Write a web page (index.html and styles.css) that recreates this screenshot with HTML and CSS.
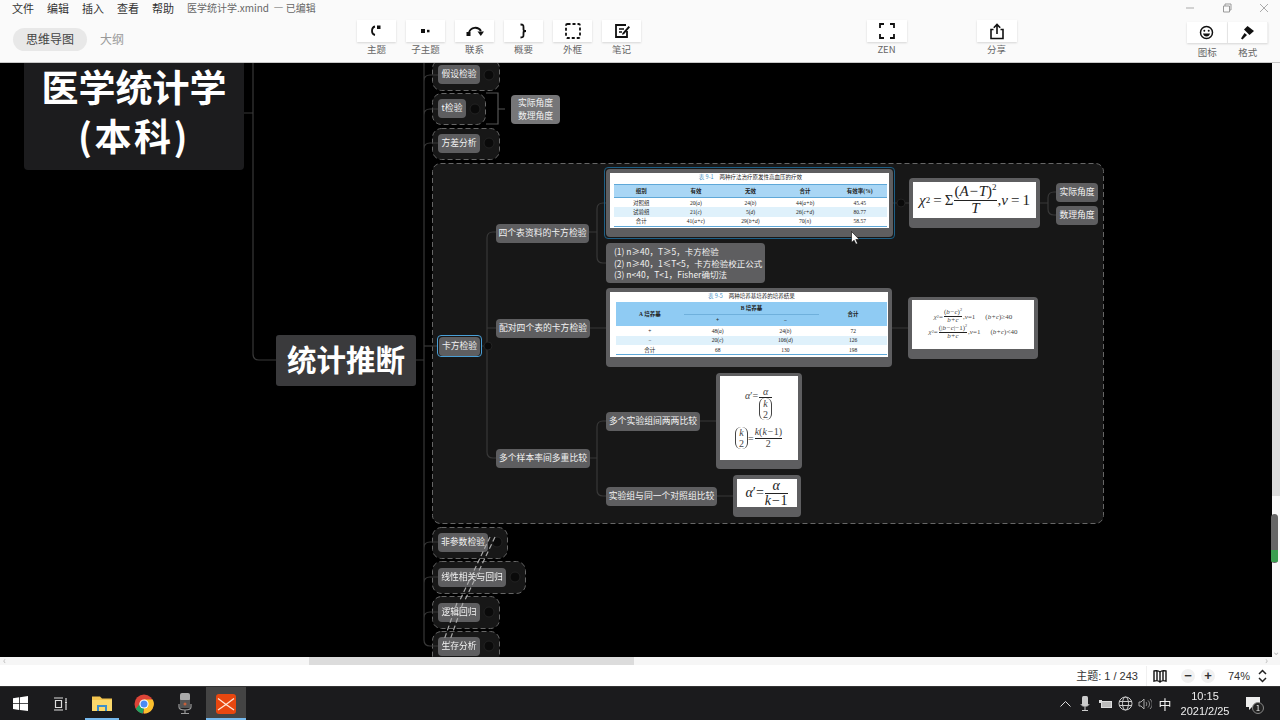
FILE: index.html
```html
<!doctype html>
<html lang="zh">
  <head>
    <meta charset="UTF-8" />
    <title>医学统计学.xmind</title>
    <link rel="stylesheet" href="styles.css">
  </head>
  <body>
    <div class="app">
      <header class="topbar">
        <div class="topbar-left">
          <nav class="menu">
            <span>文件</span><span>编辑</span><span>插入</span><span>查看</span><span>帮助</span>
            <span class="doc-title">医学统计学.xmind &nbsp;— 已编辑</span>
          </nav>
          <div class="tabs">
            <span class="tab tab-on">思维导图</span>
            <span class="tab">大纲</span>
          </div>
        </div>

        <div class="tools">
          <div class="tool">
            <div class="tool-btn"><svg width="16" height="16" viewBox="0 0 16 16"><path d="M6 3.500C3.500 4 3 6 3 8s.5 3.500 3 4" fill="none" stroke="#111" stroke-width="1.800"/><rect x="8" y="2.500" width="3.500" height="3.500" fill="#111"/></svg></div>
            <span>主题</span>
          </div>
          <div class="tool">
            <div class="tool-btn"><svg width="16" height="16" viewBox="0 0 16 16"><rect x="3" y="6" width="4" height="4" fill="#111"/><rect x="9" y="6.800" width="2.500" height="2.500" fill="#111"/></svg></div>
            <span>子主题</span>
          </div>
          <div class="tool">
            <div class="tool-btn"><svg width="20" height="16" viewBox="0 0 20 16"><path d="M4 9.500C5.500 4 13 3 16 8" fill="none" stroke="#111" stroke-width="1.800"/><rect x="1.500" y="9" width="4" height="4" fill="#111"/><path d="M12.500 8.500h6.500l-3.200 4.500z" fill="#111"/></svg></div>
            <span>联系</span>
          </div>
          <div class="tool">
            <div class="tool-btn"><svg width="16" height="16" viewBox="0 0 16 16"><path d="M4.500 1.500c3 0 3 1 3 3v2c0 1 .5 1.500 2.500 1.500-2 0-2.500.5-2.500 1.500v2c0 2 0 3-3 3" fill="none" stroke="#111" stroke-width="1.800"/></svg></div>
            <span>概要</span>
          </div>
          <div class="tool">
            <div class="tool-btn"><svg width="18" height="18" viewBox="0 0 18 18"><rect x="2" y="2" width="14" height="14" rx="1.500" fill="none" stroke="#111" stroke-width="1.800" stroke-dasharray="3 2"/></svg></div>
            <span>外框</span>
          </div>
          <div class="tool">
            <div class="tool-btn"><svg width="18" height="18" viewBox="0 0 18 18"><path d="M14 9v6H3V3h10" fill="none" stroke="#111" stroke-width="1.800"/><path d="M6 7h5M6 10h3" stroke="#111" stroke-width="1.500"/><path d="M9.500 11l6-7 1.500 1.300-6 7-2 .4z" fill="#111"/></svg></div>
            <span>笔记</span>
          </div>
        </div>

        <div class="tool tool-zen">
          <div class="tool-btn tool-wide"><svg width="16" height="16" viewBox="0 0 16 16"><path d="M1 5V1h4M11 1h4v4M15 11v4h-4M5 15H1v-4" fill="none" stroke="#111" stroke-width="1.800"/></svg></div>
          <span>ZEN</span>
        </div>
        <div class="tool tool-share">
          <div class="tool-btn tool-wide"><svg width="16" height="17" viewBox="0 0 16 17"><path d="M4.500 6.500H2v9h12v-9h-2.500" fill="none" stroke="#111" stroke-width="1.600"/><path d="M8 11V2M4.800 4.800L8 1.500l3.200 3.300" fill="none" stroke="#111" stroke-width="1.600"/></svg></div>
          <span>分享</span>
        </div>

        <div class="side-tools">
          <div class="tool side-tool">
            <div class="tool-btn tool-side"><svg width="15" height="15" viewBox="0 0 15 15"><circle cx="7.500" cy="7.500" r="6" fill="none" stroke="#111" stroke-width="1.500"/><circle cx="5.300" cy="5.800" r="1" fill="#111"/><circle cx="9.700" cy="5.800" r="1" fill="#111"/><path d="M4 8.500h7c-.4 2-1.800 3-3.500 3S4.400 10.500 4 8.500z" fill="#111"/></svg></div>
            <span>图标</span>
          </div>
          <div class="tool side-tool">
            <div class="tool-btn tool-side"><svg width="16" height="16" viewBox="0 0 16 16"><path d="M8.500 1l6.500 5-4.500 4-5.500-5.500z" fill="#111"/><path d="M5.500 8L2 13.500l1.500 1L8 10z" fill="#111"/></svg></div>
            <span>格式</span>
          </div>
        </div>

        <div class="win-ctrl">
          <svg width="10" height="10" viewBox="0 0 10 10"><path d="M1 5h8" stroke="#aaa"/></svg>
          <svg width="10" height="10" viewBox="0 0 10 10"><path d="M1.500 3h6v6h-6zM3 3V1h6v6H7.500" fill="none" stroke="#999"/></svg>
          <svg width="10" height="10" viewBox="0 0 10 10"><path d="M1 1l8 8M9 1l-8 8" stroke="#aaa"/></svg>
        </div>
      </header>

      <div class="work">
        <main class="canvas">
          <svg class="links" width="1272" height="594" viewBox="0 63 1272 594">
            <!-- topic boundaries -->
            <g fill="#171717" stroke="#666" stroke-dasharray="5 3">
              <rect x="432.500" y="59.500" width="67" height="31" rx="9"/>
              <rect x="432.500" y="93.500" width="53" height="31" rx="9"/>
              <rect x="432.500" y="128.500" width="67" height="31" rx="9"/>
              <rect x="432.500" y="163.500" width="671" height="360" rx="8"/>
              <rect x="432.500" y="527.500" width="75" height="31" rx="9"/>
              <rect x="432.500" y="561.500" width="93" height="32" rx="9"/>
              <rect x="432.500" y="596.500" width="67" height="32" rx="9"/>
              <rect x="432.500" y="631.500" width="67" height="40" rx="9"/>
            </g>
            <g fill="none" stroke="#383838" stroke-width="1.200">
              <path d="M244 113h9M253 63v291q0 6 6 6h17M416 360h8"/>
              <path d="M424 63v577q0 6 6 6h8M424 81q0-6 6-6h8M424 115q0-6 6-6h8M424 149q0-6 6-6h8M424 548q0-6 6-6h8M424 583q0-6 6-6h8M424 618q0-6 6-6h8"/>
              <path d="M424 346h13"/>
              <path d="M481 346h6M487 238v214q0 6 6 6h3M487 238q0-6 6-6h3M487 328h9"/>
              <path d="M589 232h8M597 209v48q0 6 6 6h3M597 209q0-6 6-6h3"/>
              <path d="M590 328h16M892 328h16"/>
              <path d="M590 458h7M597 427v63q0 6 6 6h3M597 427q0-6 6-6h3M700 421h16M717 496h16"/>
              <path d="M893 203h16M1040 203h8M1048 198v11M1048 198q0-6 6-6h2M1048 209q0 6 6 6h2"/>
              <path d="M486 93h12v31h-12M498 109h7" stroke="#555"/>
            </g>
            <g fill="#0a0a0a" stroke="#222">
              <circle cx="489" cy="75" r="5"/>
              <circle cx="475" cy="109" r="5"/>
              <circle cx="489" cy="143" r="5"/>
              <circle cx="488" cy="346" r="4"/>
              <circle cx="901" cy="203" r="4"/>
              <circle cx="497" cy="542" r="5"/>
              <circle cx="515" cy="577" r="5"/>
              <circle cx="489" cy="612" r="5"/>
              <circle cx="489" cy="646" r="5"/>
            </g>
          </svg>

          <div class="root"><div class="root-text">医学统计学<br><span class="root-sub">(本科)</span></div></div>
          <div class="main-topic">统计推断</div>

          <svg class="links links-top" width="1272" height="594" viewBox="0 63 1272 594">
            <path d="M495 537L465 600M490 537L460 600M463 603L449 643M457 603L444 640" fill="none" stroke="#aaa" stroke-width="1.200" stroke-dasharray="5 3"/>
          </svg>

          <div class="node n-jiashe">假设检验</div>
          <div class="node n-t">t检验</div>
          <div class="node n-fangcha">方差分析</div>
          <div class="node summary">实际角度<br>数理角度</div>

          <div class="select s-kafang"></div>
          <div class="node n-kafang">卡方检验</div>
          <div class="node n-four">四个表资料的卡方检验</div>
          <div class="node n-pair">配对四个表的卡方检验</div>
          <div class="node n-multi">多个样本率间多重比较</div>
          <div class="node n-pairwise">多个实验组间两两比较</div>
          <div class="node n-control">实验组与同一个对照组比较</div>
          <div class="node n-real1">实际角度</div>
          <div class="node n-math1">数理角度</div>

          <div class="node n-note">
            (1) n≥40，T≥5，卡方检验<br>
            (2) n≥40，1≤T&lt;5，卡方检验校正公式<br>
            (3) n&lt;40，T&lt;1，Fisher确切法
          </div>

          <div class="select s-table1"></div>
          <div class="pic p-table1">
            <div class="sheet">
              <p class="cap"><b>表 9-1</b>两种疗法治疗原发性高血压的疗效</p>
              <table class="tbl tbl-one">
                <tr class="head"><th>组别</th><th>有效</th><th>无效</th><th>合计</th><th>有效率(%)</th></tr>
                <tr><td>对照组</td><td>20(<i>a</i>)</td><td>24(<i>b</i>)</td><td>44(<i>a+b</i>)</td><td>45.45</td></tr>
                <tr class="alt"><td>试验组</td><td>21(<i>c</i>)</td><td>5(<i>d</i>)</td><td>26(<i>c+d</i>)</td><td>80.77</td></tr>
                <tr class="last"><td>合计</td><td>41(<i>a+c</i>)</td><td>29(<i>b+d</i>)</td><td>70(<i>n</i>)</td><td>58.57</td></tr>
              </table>
            </div>
          </div>

          <div class="pic p-table2">
            <div class="sheet">
              <p class="cap cap-two"><b>表 9-5</b>两种培养基培养的培养结果</p>
              <table class="tbl tbl-two">
                <tr class="head"><th rowspan="2">A 培养基</th><th colspan="2" class="th-span">B 培养基</th><th rowspan="2">合计</th></tr>
                <tr class="head"><th>+</th><th>−</th></tr>
                <tr><td>+</td><td>48(<i>a</i>)</td><td>24(<i>b</i>)</td><td>72</td></tr>
                <tr class="alt"><td>−</td><td>20(<i>c</i>)</td><td>106(<i>d</i>)</td><td>126</td></tr>
                <tr class="last"><td>合计</td><td>68</td><td>130</td><td>198</td></tr>
              </table>
            </div>
          </div>

          <div class="pic p-f1">
            <div class="sheet formula f-big">
              <i>χ</i><sup>2</sup><span class="eq">=</span>Σ
              <span class="frac"><span class="top">(<i>A−T</i>)<sup>2</sup></span><span><i>T</i></span></span>
              ,<i>ν</i><span class="eq">=</span>1
            </div>
          </div>

          <div class="pic p-f2">
            <div class="sheet formula f-small">
              <div class="f-line">
                <i>χ</i><sup>2</sup>=<span class="frac"><span class="top">(<i>b−c</i>)<sup>2</sup></span><span><i>b+c</i></span></span>,<i>ν</i>=1
                <em>(<i>b+c</i>)≥40</em>
              </div>
              <div class="f-line">
                <i>χ</i><sup>2</sup>=<span class="frac"><span class="top">(|<i>b−c</i>|−1)<sup>2</sup></span><span><i>b+c</i></span></span>,<i>ν</i>=1
                <em>(<i>b+c</i>)&lt;40</em>
              </div>
            </div>
          </div>

          <div class="pic p-f3">
            <div class="sheet formula f-tall">
              <div class="f-line f-first">
                <span class="lhs"><i>α</i>′=</span><span class="frac"><span class="top"><i>α</i></span><span class="binom"><span><i>k</i><br>2</span></span></span>
              </div>
              <div class="f-line">
                <span class="binom"><span><i>k</i><br>2</span></span>=<span class="frac"><span class="top"><i>k</i>(<i>k−</i>1)</span><span>2</span></span>
              </div>
            </div>
          </div>

          <div class="pic p-f4">
            <div class="sheet formula f-mid">
              <i>α</i>′=<span class="frac"><span class="top"><i>α</i></span><span><i>k−</i>1</span></span>
            </div>
          </div>

          <div class="cursor">
            <svg width="9" height="14" viewBox="0 0 9 14"><path d="M.5.500v11l2.600-2.300 1.800 4 1.700-.8-1.800-3.900h3.500z" fill="#fff" stroke="#000" stroke-width=".6"/></svg>
          </div>

          <div class="node n-feican">非参数检验</div>
          <div class="node n-xianxing">线性相关与回归</div>
          <div class="node n-luoji">逻辑回归</div>
          <div class="node n-shengcun">生存分析</div>
        </main>

        <aside class="vscroll">
          <div class="vthumb"></div>
          <div class="vmark"><span class="vmark-green"></span></div>
          <span class="varrow">⌄</span>
        </aside>
      </div>

      <div class="hscroll">
        <span class="harrow">‹</span>
        <div class="hthumb"></div>
        <span class="harrow harrow-r">›</span>
      </div>

      <footer class="status">
        <span class="count">主题: 1 / 243</span>
        <svg class="book" width="16" height="14" viewBox="0 0 16 14"><path d="M8 3C6.500 1.500 4 1.500 2 2v10c2-.5 4.500-.5 6 1 1.500-1.500 4-1.500 6-1V2c-2-.5-4.500-.5-6 1zM8 3v10M5 2v10M11 2v10" fill="none" stroke="#111" stroke-width="1.400"/></svg>
        <span class="zoom-btn">−</span>
        <span class="zoom-btn">+</span>
        <span class="zoom-val">74%</span>
        <svg width="9" height="14" viewBox="0 0 9 14"><path d="M1 5l3.500-3.500L8 5M1 9l3.500 3.500L8 9" fill="none" stroke="#222" stroke-width="1.500"/></svg>
      </footer>

      <footer class="taskbar">
        <div class="task-icon">
          <svg width="15" height="15" viewBox="0 0 15 15"><path d="M0 2.200l6.200-.9v5.900H0zM7 1.200L15 0v7.200H7zM0 8h6.200v5.900L0 13zM7 8h8v7l-8-1.100z" fill="#fff"/></svg>
        </div>
        <div class="task-icon">
          <svg width="16" height="14" viewBox="0 0 16 14"><path d="M1 1h9M1 13h9M2.500 3.500h6v7h-6zM13 1v3M13 7v6" fill="none" stroke="#ddd" stroke-width="1.200"/><rect x="12" y="4.500" width="2" height="2" fill="#ddd"/></svg>
        </div>
        <div class="task-icon on">
          <svg width="20" height="17" viewBox="0 0 20 17"><path d="M0 1.500h8l2 2h10V16H0z" fill="#f2c44f"/><rect x="0" y="5" width="20" height="11" fill="#fbd96c"/><rect x="5" y="10" width="10" height="6" fill="#3d8fc9"/><rect x="7" y="12" width="6" height="4" fill="#fbd96c"/></svg>
        </div>
        <div class="task-icon">
          <svg width="20" height="20" viewBox="0 0 20 20"><circle cx="10" cy="10" r="9.500" fill="#dc4437"/><path d="M10 5.500h8.700a9.500 9.500 0 0 1-8.700 14z" fill="#fbc02d"/><path d="M1.800 14.800L6.500 9 10 14.500l-1 5a9.500 9.500 0 0 1-7.200-4.700z" fill="#1fa463"/><circle cx="10" cy="10" r="4.600" fill="#fff"/><circle cx="10" cy="10" r="3.500" fill="#4a8af4"/></svg>
        </div>
        <div class="task-icon">
          <svg width="14" height="22" viewBox="0 0 14 22"><rect x="2" y="0" width="10" height="8" rx="2" fill="#aaa"/><rect x="2" y="7" width="10" height="8" fill="#555"/><circle cx="7" cy="11" r="1.500" fill="#c6603a"/><path d="M1 11v3c0 2 2 3 6 3s6-1 6-3v-3M7 17v3M3 20.500h8" fill="none" stroke="#999" stroke-width="1.200"/></svg>
        </div>
        <div class="task-icon on active">
          <svg width="20" height="20" viewBox="0 0 20 20"><rect width="20" height="20" rx="3" fill="#e8470f"/><path d="M2 4.500l8 6 8-6M2 16l8-5.500 8 5.500" fill="none" stroke="#ffe7d8" stroke-width="1.300"/></svg>
        </div>
        <div class="tray">
          <span class="tray-icon"><svg width="11" height="7" viewBox="0 0 11 7"><path d="M.5 6.500l5-5 5 5" fill="none" stroke="#ddd"/></svg></span>
          <span class="tray-icon"><svg width="10" height="15" viewBox="0 0 10 15"><rect x="2" y="0" width="6" height="10" rx="1.500" fill="#ccc"/><path d="M1 8c0 3 8 3 8 0M5 11v3M2 14.500h6" fill="none" stroke="#ccc"/></svg></span>
          <span class="tray-icon"><svg width="13" height="8" viewBox="0 0 13 8"><rect x="2.500" y="1.500" width="10" height="6" fill="#bbb" stroke="#ddd"/><rect x="0" y="0" width="3" height="3" fill="#ddd"/></svg></span>
          <span class="tray-icon"><svg width="15" height="15" viewBox="0 0 15 15"><circle cx="7.500" cy="7.500" r="6.500" fill="none" stroke="#ccc"/><ellipse cx="7.500" cy="7.500" rx="3" ry="6.500" fill="none" stroke="#ccc"/><path d="M1 5.500h13M1 9.500h13" stroke="#ccc"/></svg></span>
          <span class="tray-icon"><svg width="14" height="12" viewBox="0 0 14 12"><path d="M1 4h2l3-3v10L3 8H1z" fill="none" stroke="#aaa"/><path d="M8 4c1 1 1 3 0 4M10 2.500c2 2 2 5 0 7M12 1c3 3 3 7 0 10" fill="none" stroke="#aaa" stroke-width=".8"/></svg></span>
          <span class="tray-icon ime">中</span>
          <div class="clock">10:15<br>2021/2/25</div>
          <div class="notify">
            <svg width="14" height="13" viewBox="0 0 14 13"><path d="M0 0h14v10H6l-3 3v-3H0z" fill="#eee"/></svg>
            <span class="badge">1</span>
          </div>
        </div>
      </footer>
    </div>
  </body>
</html>
```

FILE: styles.css
```css
* {
  box-sizing: border-box;
}

html,
body {
  margin: 0;
  height: 100%;
  overflow: hidden;
}

body {
  font-family: "Noto Sans CJK SC", "Liberation Sans", sans-serif;
  color: #333;
}

.app {
  display: flex;
  flex-direction: column;
  width: 1280px;
  height: 720px;
  filter: blur(0.35px);
}

/* top bar */
.topbar {
  position: relative;
  display: flex;
  flex: 0 0 63px;
  background-color: #fafafa;
  border-bottom: 1px solid #c8c8c8;
}

.topbar-left {
  flex: 0 0 357px;
  padding: 0 0 0 12px;
}

.menu {
  display: flex;
  gap: 13px;
  font-size: 11px;
  line-height: 16px;
  color: #333;
}

.doc-title {
  font-size: 10px;
  color: #666;
}

.tabs {
  display: flex;
  align-items: center;
  margin: 12px 0 0 1px;
  font-size: 12px;
}

.tab {
  height: 23px;
  padding: 0 13px;
  line-height: 22px;
  color: #999;
}

.tab-on {
  background-color: #e8e8e8;
  border-radius: 12px;
  color: #444;
}

.tools {
  display: flex;
  gap: 10px;
  padding-top: 20px;
}

.tool {
  display: flex;
  flex-direction: column;
  align-items: center;
  width: 39px;
  font-size: 9.500px;
  color: #666;
}

.tool span {
  line-height: 14px;
}

.tool-btn {
  display: flex;
  align-items: center;
  justify-content: center;
  width: 39px;
  height: 22px;
  background-color: #fff;
  box-shadow: 0 1px 2px rgba(0, 0, 0, 0.15);
}

.tool-zen {
  margin: 20px 0 0 226px;
}

.tool-share {
  margin: 20px 0 0 71px;
}

.tool-wide {
  width: 40px;
}

.side-tools {
  display: flex;
  margin: 22px 0 0 171px;
}

.side-tool {
  width: 40.500px;
}

.side-tool span {
  margin-top: 2px;
}

.tool-side {
  width: 40.500px;
  height: 21px;
  border-right: 1px solid #f0f0f0;
}

.win-ctrl {
  position: absolute;
  top: 3px;
  left: 1185px;
  display: flex;
  gap: 27px;
}

/* canvas */
.work {
  display: flex;
  flex: 0 0 594px;
}

.canvas {
  position: relative;
  flex: 0 0 1272px;
  background-color: #000;
}

.links {
  position: absolute;
  top: 0;
  left: 0;
}

.links-top {
  z-index: 3;
}

.root {
  position: absolute;
  top: 0;
  left: 24px;
  width: 220px;
  height: 107px;
  background-color: #1c1c1e;
  border-radius: 0 0 4px 4px;
  color: #fff;
  font-size: 37px;
  font-weight: 700;
  line-height: 49px;
  text-align: center;
}

.root-text {
  margin-top: -1.500px;
}

.root-sub {
  letter-spacing: 2.500px;
}

.main-topic {
  position: absolute;
  top: 272px;
  left: 276px;
  width: 140px;
  height: 51px;
  background-color: #3a3a3c;
  border-radius: 3px;
  color: #fff;
  font-size: 29.500px;
  font-weight: 700;
  line-height: 46px;
  text-align: center;
}

.node {
  position: absolute;
  z-index: 2;
  height: 19px;
  background-color: #5e5e60;
  border-radius: 4px;
  color: #f2f2f2;
  font-size: 8.800px;
  line-height: 18px;
  text-align: center;
  white-space: nowrap;
}

.n-jiashe { top: 2px; left: 438px; width: 42px; }
.n-t { top: 36px; left: 438px; width: 28px; }
.n-fangcha { top: 71px; left: 438px; width: 42px; }
.n-kafang { top: 274px; left: 439px; width: 41px; }
.n-four { top: 161px; left: 496px; width: 93px; }
.n-pair { top: 256px; left: 496px; width: 94px; }
.n-multi { top: 386px; left: 496px; width: 94px; }
.n-pairwise { top: 349px; left: 606px; width: 94px; }
.n-control { top: 424px; left: 606px; width: 111px; }
.n-real1 { top: 120px; left: 1056px; width: 42px; }
.n-math1 { top: 143px; left: 1056px; width: 42px; }
.n-feican { top: 470px; left: 438px; width: 50px; }
.n-xianxing { top: 505px; left: 438px; width: 68px; }
.n-luoji { top: 540px; left: 438px; width: 42px; }
.n-shengcun { top: 574px; left: 438px; width: 42px; }

.summary {
  top: 32px;
  left: 511px;
  width: 49px;
  height: 29px;
  padding-top: 1px;
  background-color: #767678;
  line-height: 13px;
}

.n-note {
  top: 180px;
  left: 606px;
  width: 159px;
  height: 40px;
  padding: 3px 0 0 8px;
  font-size: 8.500px;
  line-height: 11.500px;
  text-align: left;
}

.select {
  position: absolute;
  z-index: 2;
  border: 1.500px solid #1d5f86;
  border-radius: 4px;
}

.s-kafang { top: 272px; left: 437px; width: 45px; height: 22px; border-color: #4a9fd6; }
.s-table1 { top: 104px; left: 604px; width: 291px; height: 72px; }

.pic {
  position: absolute;
  z-index: 2;
  padding: 4px 4px 0;
  background-color: #5e5e60;
  border-radius: 4px;
}

.p-table1 { top: 106px; left: 606px; width: 287px; height: 68px; }
.p-table2 { top: 225px; left: 606px; width: 286px; height: 79px; }
.p-f1 { top: 115px; left: 909px; width: 131px; height: 50px; }
.p-f2 { top: 234px; left: 908px; width: 130px; height: 62px; padding-top: 3px; }
.p-f3 { top: 310px; left: 716px; width: 86px; height: 96px; padding-top: 3px; }
.p-f4 { top: 412px; left: 733px; width: 68px; height: 42px; }

.sheet {
  background-color: #fff;
  color: #222;
}

.p-table1 .sheet { height: 55px; padding: 1px 2px 0 4px; }
.p-table2 .sheet { height: 65px; padding: 1px 1px 0 6px; }
.p-f1 .sheet { height: 36px; }
.p-f2 .sheet { height: 49px; }
.p-f3 .sheet { height: 84px; }
.p-f4 .sheet { height: 28px; }

.cap {
  margin: 0 0 3px;
  font-size: 5.500px;
  line-height: 7px;
  text-align: center;
  color: #222;
}

.cap b {
  margin-right: 6px;
  color: #3f8fc4;
  font-weight: 400;
}

.cap-two {
  margin-bottom: 2px;
}

.tbl {
  width: 100%;
  table-layout: fixed;
  border-collapse: collapse;
  font-family: "Liberation Serif", "Noto Sans CJK SC", serif;
  font-size: 5.500px;
  text-align: center;
  color: #222;
}

.tbl th {
  padding: 0;
  background-color: #a9d6f5;
  border-top: 1px solid #5fa8d8;
  border-bottom: 1px solid #5fa8d8;
  font-weight: 700;
}

.tbl td {
  padding: 0;
}

.tbl .alt td {
  background-color: #dff1fb;
}

.tbl .last td {
  border-bottom: 1px solid #5fa8d8;
}

.tbl-one th {
  height: 13px;
}

.tbl-one td {
  height: 9.500px;
}

.tbl-two th {
  height: 12px;
  border-top: 0;
  border-bottom: 0;
  background-color: #8fcbf3;
}

.tbl-two .th-span {
  border-bottom: 1px solid #6fb0dc;
}

.tbl-two td {
  height: 9.500px;
}

.formula {
  display: flex;
  align-items: center;
  justify-content: center;
  font-family: "Liberation Serif", serif;
  color: #222;
  white-space: nowrap;
}

.frac {
  display: inline-flex;
  flex-direction: column;
  align-items: center;
  margin: 0 1px;
  line-height: 1.050;
}

.frac .top {
  align-self: stretch;
  border-bottom: 1px solid #222;
  text-align: center;
}

.frac sup,
.formula sup {
  font-size: 60%;
  line-height: 0;
}

.eq {
  margin: 0 3px;
}

.f-big {
  font-size: 15px;
}

.f-small {
  flex-direction: column;
  font-size: 7px;
  color: #444;
}

.f-small .f-line {
  display: flex;
  align-items: center;
}

.f-small em {
  margin-left: 10px;
  font-style: normal;
}

.f-tall {
  flex-direction: column;
  gap: 7px;
  font-size: 10px;
  color: #444;
}

.f-tall .f-line {
  display: flex;
  align-items: center;
}

.f-tall .f-first {
  align-items: flex-start;
}

.lhs {
  margin-top: 3px;
}

.binom {
  display: inline-block;
  padding: 0 3px;
  border-left: 1px solid #444;
  border-right: 1px solid #444;
  border-radius: 6px;
  line-height: 11px;
  text-align: center;
}

.f-mid {
  font-size: 14px;
}

.f-mid .frac {
  line-height: 0.950;
}

.cursor {
  position: absolute;
  z-index: 4;
  top: 168px;
  left: 851px;
  line-height: 0;
}

/* scrollbars */
.vscroll {
  position: relative;
  flex: 0 0 8px;
  background-color: #f8f8f8;
}

.vthumb {
  position: absolute;
  top: 287px;
  left: 0;
  width: 8px;
  height: 146px;
  background-color: #dcdcdc;
}

.vmark {
  position: absolute;
  top: 451px;
  left: -1px;
  width: 7px;
  height: 49px;
  overflow: hidden;
  background-color: #666;
  border-radius: 4px;
}

.vmark-green {
  position: absolute;
  bottom: 1px;
  left: 0;
  width: 7px;
  height: 12px;
  background-color: #3a9e50;
}

.varrow {
  position: absolute;
  bottom: 2px;
  left: 0;
  color: #bbb;
  font-size: 10px;
  line-height: 8px;
}

.hscroll {
  position: relative;
  flex: 0 0 8px;
  background-color: #f6f6f6;
}

.hthumb {
  position: absolute;
  top: 0;
  left: 309px;
  width: 325px;
  height: 8px;
  background-color: #dcdcdc;
}

.harrow {
  position: absolute;
  top: -2px;
  left: 3px;
  color: #bbb;
  font-size: 10px;
  line-height: 10px;
}

.harrow-r {
  left: 1265px;
}

/* status */
.status {
  display: flex;
  flex: 0 0 21px;
  align-items: center;
  justify-content: flex-end;
  padding: 1px 13px 0 0;
  background-color: #fff;
  font-family: "Liberation Sans", "Noto Sans CJK SC", sans-serif;
  font-size: 11px;
  color: #333;
}

.count {
  padding-right: 8px;
  border-right: 1px solid #f0f0f0;
  line-height: 20px;
}

.book {
  margin: 0 13px 0 5px;
}

.zoom-btn {
  width: 14px;
  height: 14px;
  margin-right: 6px;
  background-color: #f1f1f1;
  border-radius: 50%;
  font-size: 13px;
  font-weight: 700;
  line-height: 13px;
  text-align: center;
}

.zoom-val {
  margin: 0 8px 0 7px;
}

/* windows taskbar */
.taskbar {
  position: relative;
  display: flex;
  flex: 0 0 34px;
  background-color: #1b1b1d;
  border-top: 1px solid #333;
}

.task-icon {
  position: relative;
  display: flex;
  align-items: center;
  justify-content: center;
  width: 40px;
  height: 33px;
  margin-right: 1.200px;
}

.task-icon.on::after {
  content: "";
  position: absolute;
  bottom: 0;
  left: 3px;
  right: 3px;
  height: 2px;
  background-color: #76b9ed;
}

.task-icon.active {
  background-color: #444;
}

.task-icon.active::after {
  left: 0;
  right: 0;
}

.tray {
  display: flex;
  align-items: center;
  margin-left: auto;
  padding-right: 20px;
  color: #eee;
}

.tray-icon {
  display: flex;
  align-items: center;
  justify-content: center;
  width: 20px;
}

.ime {
  font-size: 13px;
}

.clock {
  width: 54px;
  margin: 0 14px 0 3px;
  font-family: "Liberation Sans", sans-serif;
  font-size: 11px;
  line-height: 15px;
  text-align: center;
}

.notify {
  position: relative;
  line-height: 0;
}

.badge {
  position: absolute;
  top: 5px;
  left: 6px;
  width: 12px;
  height: 12px;
  background-color: #222;
  border: 1px solid #888;
  border-radius: 50%;
  font-size: 8px;
  line-height: 10px;
  text-align: center;
}
```
